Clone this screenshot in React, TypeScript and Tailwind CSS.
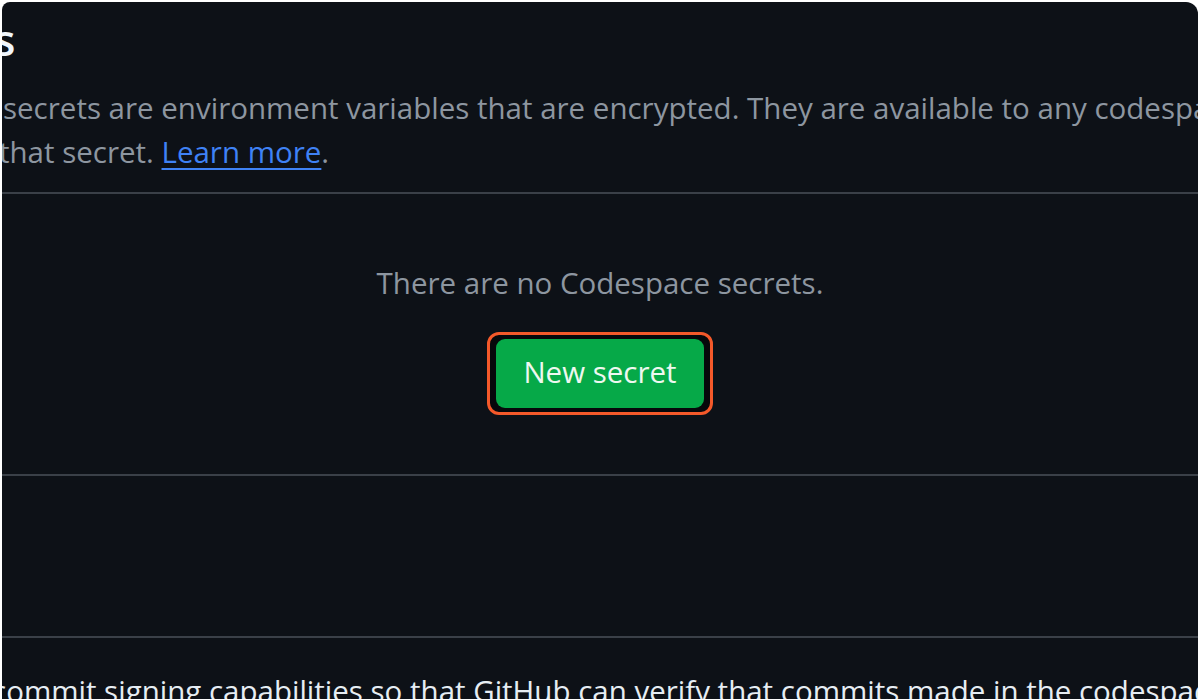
export default function App() {
  const font = { fontFamily: '"Open Sans", "Noto Sans", sans-serif' }

  return (
    <div className="w-[1200px] h-[699px] bg-white pt-[2px] px-[2px] overflow-hidden" style={font}>
      <div className="h-full bg-[#0d1117] rounded-tl-[8px] rounded-tr-[12px] overflow-hidden flex flex-col">
        {/* header */}
        <div className="pt-[10px] whitespace-nowrap">
          <h2 className="-ml-[8px] text-[44px] leading-[55px] font-semibold text-[#f0f6fc]">s</h2>
        </div>

        <div className="mt-[19px] text-[29.5px] leading-[44px] text-[#8d96a0] whitespace-nowrap">
          <p className="ml-[1px]">secrets are environment variables that are encrypted. They are available to any codespace you create</p>
          <p className="-ml-[3px]">
            that secret.{' '}
            <a href="#" className="text-[#3f82f5] underline underline-offset-[5px] decoration-[2px]">Learn more</a>.
          </p>
        </div>

        <div className="mt-[18px] h-[2px] bg-[#3a4048] shrink-0" />

        {/* empty state */}
        <div className="flex flex-col items-center pt-[67px] pb-[59px]">
          <p className="text-[29.5px] leading-[44px] text-[#8d96a0]">There are no Codespace secrets.</p>
          <div className="mt-[27px] border-[3px] border-[#f4592a] rounded-[12px] px-[6px] py-[4px] bg-[#06080b]">
            <button className="w-[208px] h-[69px] pb-[3px] rounded-[9px] bg-[#06a948] text-[29.5px] text-[#eef8f0] flex items-center justify-center">
              New secret
            </button>
          </div>
        </div>

        <div className="h-[2px] bg-[#3a4048] shrink-0" />

        <div className="h-[160px] shrink-0" />

        <div className="h-[2px] bg-[#3a4048] shrink-0" />

        <div className="pt-[31px] whitespace-nowrap">
          <p className="-ml-[10px] text-[29.5px] leading-[44px] text-[#e6edf3]">
            commit signing capabilities so that GitHub can verify that commits made in the codespace come from a trusted source.
          </p>
        </div>
      </div>
    </div>
  )
}
